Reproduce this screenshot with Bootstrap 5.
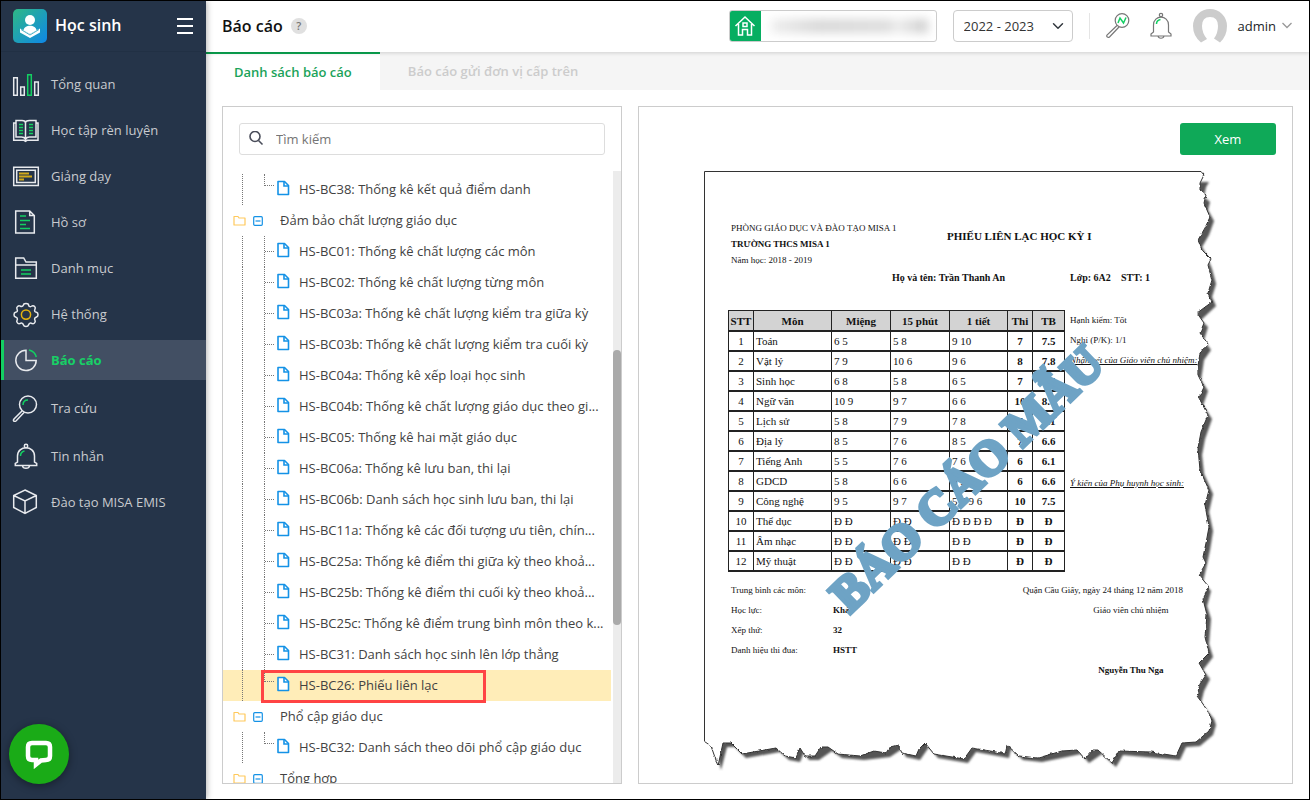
<!DOCTYPE html>
<html lang="vi">
<head>
<meta charset="utf-8">
<meta name="viewport" content="width=device-width, initial-scale=1">
<title>Báo cáo - Học sinh</title>
<link href="https://cdn.jsdelivr.net/npm/bootstrap@5.3.0/dist/css/bootstrap.min.css" rel="stylesheet">
<style>
body{font-family:"Open Sans",sans-serif;font-size:13px;line-height:20px;color:#424242;background:#fff}
a{text-decoration:none}
.app{height:100vh;border:1px solid #000;overflow:hidden}
/* sidebar */
.side{width:205px;background:#253449;box-shadow:1px 0 6px rgba(0,0,0,.3);z-index:2}
.side-head{height:51px;padding:0 12px;border-bottom:1px solid #213044}
.side-head h1{font-size:16px;font-weight:600;color:#fff;line-height:24px;padding-bottom:2px}
.side-list{padding-top:12px;gap:6px}
.side-list a{min-height:40px;color:#c9cbcf;padding-left:8px;border-left:3px solid transparent}
.side-list .tall a{min-height:44px}
.side-list svg{width:28px;height:28px;margin-right:11px;fill:none;stroke:#e8eaee;stroke-width:1.5}
.side-list .active{background:#424f63;border-left-color:#13cf62;color:#18cf66;font-weight:700}
.menu-btn{padding-bottom:4px!important}
.chat{left:8px;bottom:15px;width:60px;height:60px;border-radius:50%;background:#1aab17;box-shadow:0 2px 8px rgba(0,0,0,.4)}
/* header */
.topbar{height:51px;box-shadow:0 1px 4px rgba(0,0,0,.16);z-index:1;padding:0 17px 2px 16px;color:#212121}
.topbar h2{font-size:16px;font-weight:600;line-height:24px;color:#111}
.help{width:16px;height:16px;border-radius:50%;background:#e0e0e0;color:#777;font-size:11px;font-weight:600;line-height:16px}
.school{width:208px;height:32px;border:1px solid #ccc;border-radius:3px}
.school-icon{width:31px;background:#06ae61}
.school-name{filter:blur(5px);background:linear-gradient(90deg,#eee,#d8d8d8 30%,#ddd 75%,#eee 80%,#ccc);margin:8px 8px 8px 10px}
.year{width:120px;height:32px;font-size:13px;line-height:20px;padding:5px 30px 5px 10px;border:1px solid #ccc;border-radius:4px;color:#333;background-size:12px 12px;background-position:right 8px center}
.sep{width:1px;height:26px;background:#e5e5e5}
.avatar{margin-right:10px}
.caret{margin-left:6px}
/* tabs */
.tabs{height:38px;background:#f5f5f5;font-weight:600}
.tabs a{padding:0 28px;color:#ccc}
.tabs .on{background:#fff;border-top:2px solid #0aa550;color:#1ba35a}
.work{padding:16px;padding-bottom:15px;gap:16px}
.pane{border:1px solid #ccc}
/* tree */
.tree-pane{width:400px}
.find{height:32px;margin:16px;border:1px solid #ddd;border-radius:3px}
.find input{border:0;font-size:13px;padding:0 12px;outline:0}
.find input::placeholder{color:#757575;opacity:1}
.tree{padding-top:3px;margin-right:2px}
.tree li{height:31px}
.tree .picked{background:#ffedb8}
.tree a{color:#424242;white-space:nowrap;padding-bottom:2px}
.trunk{width:20px;border-right:1px dotted #777}
.branch{width:22px;border-right:1px dotted #777}
.twig{width:9px;height:16px;border-bottom:1px dotted #777;margin-right:2px}
.last .branch{height:12px}
.last .twig{height:12px}
.leaf{width:14px;height:16px;margin:6px 9px 0 0}
.group{padding-left:10px}
.group .folder{width:13px;height:11px;margin-right:7px}
.group .toggle{width:10px;height:10px;margin-right:17px}
.callout{left:38px;top:0;width:225px;height:33px;border:3px solid #f44;z-index:1}
.rail{width:8px;background:#ececec;padding-top:179px}
.thumb{height:275px;background:#aaa;border-radius:4px}
.view{width:96px;height:32px;background:#0fa958;color:#fff;font-size:13px;line-height:20px;border:0;border-radius:3px}
.view:hover{background:#0b9a4e;color:#fff}
/* sample report */
.paper{width:523px;height:600px;font-family:"Liberation Serif",serif;font-size:9px;line-height:16px;color:#111;padding:49px 0 0 24px}
.edge{left:0;top:0;width:523px;height:600px}
.org{width:219px;padding-left:3px}
.report-title{font-size:11px;line-height:16px;font-weight:700;margin-top:8px}
.who{grid-template-columns:164px 178px 51px auto;font-size:10px;font-weight:700;line-height:20px;margin-bottom:22px}
.marks{width:336px;table-layout:fixed;border-collapse:collapse;font-size:11px;line-height:16px;text-align:center}
.marks th,.marks td{border:1px solid #222;border-bottom-width:2px;height:20px;padding:1px 2px 0;white-space:nowrap}
.marks th{background:#d3d3d3;padding:1px 0 0}
.marks td:nth-child(n+2):nth-child(-n+5){text-align:left}
.marks td:nth-child(n+6){font-weight:700}
.notes{line-height:20px;padding-left:5px}
.sums{grid-template-columns:102px 100px;line-height:20px;margin:8px 0 0 3px;align-content:start}
.sign{line-height:20px;margin:8px 44px 0 0;white-space:nowrap}
.signer{padding-left:56px}
.stamp{left:50%;top:50%;font-size:49px;line-height:48px;font-weight:700;color:#6ea3c5;-webkit-text-stroke:4px #6ea3c5;white-space:nowrap;transform:translate(-50%,-50%) rotate(-44deg);margin:8px 0 0 1px}
</style>
</head>
<body>
<svg class="d-none">
<symbol id="leaf" viewBox="0 0 14 16"><path d="M2 1.500h6.500l4 4v9H2z" fill="#fff" stroke="#1492e6" stroke-width="1.600" stroke-linejoin="round"/><path d="M8 1.500v4.500h4.500" fill="none" stroke="#1492e6" stroke-width="1.600"/></symbol>
<symbol id="folder" viewBox="0 0 13 11"><path d="M1 1.500h4l1 1.500h6v7H1z" fill="none" stroke="#ffc95c" stroke-width="1.200" stroke-linejoin="round"/></symbol>
<symbol id="minus" viewBox="0 0 10 10"><rect x=".7" y=".7" width="8.600" height="8.600" rx="1" fill="#fff" stroke="#1492e6" stroke-width="1.200"/><path d="M2.500 5h5" stroke="#1492e6" stroke-width="1.200"/></symbol>
</svg>
<div class="app d-flex">
<aside class="side position-relative flex-shrink-0">
  <div class="side-head d-flex align-items-center">
    <svg width="34" height="34" viewBox="0 0 34 34"><defs><linearGradient id="lg" x1="0" y1="0" x2="1" y2="1"><stop stop-color="#2fb985"/><stop offset="1" stop-color="#0e87e8"/></linearGradient></defs><rect width="34" height="34" rx="5" fill="url(#lg)"/><circle cx="17" cy="11" r="5" fill="#fff"/><path d="M10.500 21.500c0-6.500 13-6.500 13 0L17 25z" fill="#fff"/><path d="M7 19.500l3 1.500 7 4 7-4 3-1.500v4L17 29 7 23.500z" fill="#fff"/><path d="M8 20.500l9 5.500 9-5.500" fill="none" stroke="#1f9fb8" stroke-width=".8"/></svg>
    <h1 class="mb-0 ms-2 me-auto">Học sinh</h1>
    <button class="menu-btn btn p-0 border-0" aria-label="Menu"><svg width="18" height="18" viewBox="0 0 18 18"><path d="M1 2h16M1 9h16M1 16h16" stroke="#fff" stroke-width="2.200"/></svg></button>
  </div>
  <ul class="side-list nav flex-column flex-nowrap">
    <li><a href="#" class="d-flex align-items-center"><svg viewBox="0 0 28 28"><path d="M1.700 7.700h3.600v17.600H1.700zM8.700 17h3.600v8.300H8.700zM22.700 12h3.600v13.300h-3.600z"/><path d="M15.700 4.700h3.600v20.600h-3.600z" stroke="#13cf62"/></svg>Tổng quan</a></li>
    <li><a href="#" class="d-flex align-items-center"><svg viewBox="0 0 28 28"><path d="M4 7H1.700v17.300H12l1.500 1 1.500-1h11V7h-2M4 4.500h6c2 0 3.500 1 3.500 2.500v16c-1-1.500-2-2-4-2H4zM24 4.500h-6.500c-2 0-4 1-4 2.500v16c1-1.500 2-2 4-2H24z"/><path d="M7 8.500h4M7 11.500h4M7 14.500h4M7 17.500h4M17 8.500h4M17 11.500h4M17 14.500h4M17 17.500h4" stroke="#13cf62"/></svg>Học tập rèn luyện</a></li>
    <li><a href="#" class="d-flex align-items-center"><svg viewBox="0 0 28 28"><path d="M1.700 5.200h24.600v18.300H1.700zM4.700 8.200h18.600v12.300H4.700z"/><path d="M7 11.500h10M7 14.500h13M7 17.500h5" stroke="#d3a91a" stroke-width="2"/></svg>Giảng dạy</a></li>
    <li><a href="#" class="d-flex align-items-center"><svg viewBox="0 0 28 28"><path d="M3.700 3h14l4.600 4.500V25H3.700zM17.700 3v4.500h4.600"/><path d="M8 8h6M8 12.500h10M8 16.500h6M8 20.500h10" stroke="#13cf62"/></svg>Hồ sơ</a></li>
    <li><a href="#" class="d-flex align-items-center"><svg viewBox="0 0 28 28"><path d="M3.700 24.300V4h8l2.300 4h10.300v16.300zM3.700 11h20.600"/><path d="M9 16h10M9 20h10" stroke="#13cf62"/></svg>Danh mục</a></li>
    <li><a href="#" class="d-flex align-items-center"><svg viewBox="0 0 28 28"><path d="M11.500 5c0-2 5-2 5 0 .5 2 2 2 3.500 1 2-1 4 1.500 3 3-1 2 0 3 1.500 3.300 2 .7 2 4 0 4.700-1.500.5-2.500 1.500-1.500 3.500 1 1.500-1.500 4-3 3-2-1-3 0-3.500 1.500-.5 2-4.500 2-5 0-.5-1.500-1.500-2.500-3.500-1.500-1.500 1-4-1.500-3-3 1-2 0-3-1.500-3.500-2-.7-2-4 0-4.700C5 12 6 11 5 9 4 7.500 6.500 5 8 6c2 1 3 0 3.500-1z"/><circle cx="14" cy="14.600" r="4.600" stroke="#e3b30f"/></svg>Hệ thống</a></li>
    <li><a href="#" class="active d-flex align-items-center"><svg viewBox="0 0 28 28"><path d="M14 4.200a10.200 10.200 0 1 0 10.200 10.300H14z"/><path d="M17 4c4 1 6.500 3.500 7.300 7" stroke="#13cf62"/></svg>Báo cáo</a></li>
    <li class="tall"><a href="#" class="d-flex align-items-center"><svg viewBox="0 0 28 28"><circle cx="16" cy="10.500" r="8.500"/><path d="M10 17l-8 8c-1.500 2 .5 3 2 2l8-8.500"/><path d="M11 11c0-3 2-5 5-5" stroke="#13cf62"/></svg>Tra cứu</a></li>
    <li><a href="#" class="d-flex align-items-center"><svg viewBox="0 0 28 28"><circle cx="14" cy="4" r="1.700"/><path d="M5.500 20v-6c0-11 17-11 17 0v6l2.200 1.500v2H3.300v-2zM10.500 24c.5 3 6.500 3 7 0"/><path d="M8.500 14c0-3 1.500-4.500 4-5" stroke="#13cf62"/></svg>Tin nhắn</a></li>
    <li><a href="#" class="d-flex align-items-center"><svg viewBox="0 0 28 28"><path d="M13 2L24.300 7.500v12L13 25.500l-11.300-6v-12zM1.700 7.500L13 13l11.300-5.500M13 13v12.500"/></svg>Đào tạo MISA EMIS</a></li>
  </ul>
  <button class="chat btn p-0 border-0 position-absolute" aria-label="Chat"><svg width="30" height="30" viewBox="0 0 30 30"><path d="M8 4h14q4 0 4 4v9q0 4-4 4l-5 .5-5 4V21H8q-4 0-4-4V8q0-4 4-4z" fill="none" stroke="#fff" stroke-width="4.500"/></svg></button>
</aside>
<div class="d-flex flex-column flex-fill overflow-hidden">
  <header class="topbar d-flex align-items-center position-relative flex-shrink-0 bg-white">
    <h2 class="mb-0">Báo cáo</h2>
    <span class="help text-center ms-2 me-auto">?</span>
    <div class="school d-flex overflow-hidden">
      <span class="school-icon d-flex align-items-center justify-content-center"><svg width="22" height="22" viewBox="0 0 22 22" fill="none" stroke="#fff" stroke-width="1.500"><path d="M1.500 11L11 2l9.500 9M4.500 9v11h4v-5.500h5V20h4V9M9 8h4v3.500H9z"/></svg></span>
      <span class="school-name flex-fill"></span>
    </div>
    <select class="form-select year ms-3" aria-label="Năm học"><option>2022 - 2023</option></select>
    <span class="sep ms-3 me-3"></span>
    <a href="#" aria-label="Tra cứu"><svg width="24" height="26" viewBox="0 0 24 26" fill="none" stroke="#777" stroke-width="1.200"><circle cx="16" cy="7.500" r="6.800"/><path d="M11 12.500l-10 9.500c-1 1.800 1 3 2.500 2L13 14"/><path d="M12 10l2-5 3.500 5L20 4.500" stroke="#13cf62" stroke-width="1.500"/></svg></a>
    <a href="#" class="ms-3" aria-label="Thông báo"><svg width="30" height="30" viewBox="0 0 30 30" fill="none" stroke="#777" stroke-width="1.200"><circle cx="15" cy="4" r="1.700"/><path d="M7.500 21V14c0-10.500 15-10.500 15 0v7l2.500 2v2H5v-2zM12 25c.5 3 5.500 3 6 0"/><path d="M10.500 13c0-3 1.500-4 4-4.500" stroke="#13cf62" stroke-width="1.500"/></svg></a>
    <a href="#" class="d-flex align-items-center text-dark ms-3"><svg width="36" height="38" viewBox="0 0 36 38" class="avatar"><path d="M9 35.500Q1 29 1 19a17 17 0 0 1 34 0q0 10-7 16.500l-6-4Q26 26 26 19q0-9-8-9t-8 9q0 7 5 13z" fill="#ccc"/></svg>admin<svg class="caret" width="10" height="7" viewBox="0 0 10 7"><path d="M.5 1L5 5.500 9.500 1" fill="none" stroke="#999" stroke-width="1.300"/></svg></a>
  </header>
  <nav class="tabs d-flex flex-shrink-0"><a href="#" class="on d-flex align-items-center">Danh sách báo cáo</a><a href="#" class="d-flex align-items-center">Báo cáo gửi đơn vị cấp trên</a></nav>
  <main class="work d-flex flex-fill overflow-hidden">
    <section class="tree-pane pane d-flex flex-column flex-shrink-0 overflow-hidden">
      <div class="find d-flex align-items-center flex-shrink-0"><svg class="ms-2" width="16" height="16" viewBox="0 0 16 16" fill="none" stroke="#4a4d5a" stroke-width="1.600"><circle cx="7" cy="5.500" r="5"/><path d="M10.500 9.500L14.500 13.500"/></svg><input type="text" class="flex-fill" placeholder="Tìm kiếm" aria-label="Tìm kiếm"></div>
      <div class="d-flex flex-fill overflow-hidden">
      <ul class="tree list-unstyled mb-0 flex-fill">
        <li class="last d-flex"><span class="trunk"></span><span class="branch"></span><span class="twig"></span><svg class="leaf"><use href="#leaf"/></svg><a href="#" class="align-self-center">HS-BC38: Thống kê kết quả điểm danh</a></li>
        <li class="group d-flex align-items-center"><svg class="folder"><use href="#folder"/></svg><svg class="toggle"><use href="#minus"/></svg><a href="#">Đảm bảo chất lượng giáo dục</a></li>
        <li class="d-flex"><span class="trunk"></span><span class="branch"></span><span class="twig"></span><svg class="leaf"><use href="#leaf"/></svg><a href="#" class="align-self-center">HS-BC01: Thống kê chất lượng các môn</a></li>
        <li class="d-flex"><span class="trunk"></span><span class="branch"></span><span class="twig"></span><svg class="leaf"><use href="#leaf"/></svg><a href="#" class="align-self-center">HS-BC02: Thống kê chất lượng từng môn</a></li>
        <li class="d-flex"><span class="trunk"></span><span class="branch"></span><span class="twig"></span><svg class="leaf"><use href="#leaf"/></svg><a href="#" class="align-self-center">HS-BC03a: Thống kê chất lượng kiểm tra giữa kỳ</a></li>
        <li class="d-flex"><span class="trunk"></span><span class="branch"></span><span class="twig"></span><svg class="leaf"><use href="#leaf"/></svg><a href="#" class="align-self-center">HS-BC03b: Thống kê chất lượng kiểm tra cuối kỳ</a></li>
        <li class="d-flex"><span class="trunk"></span><span class="branch"></span><span class="twig"></span><svg class="leaf"><use href="#leaf"/></svg><a href="#" class="align-self-center">HS-BC04a: Thống kê xếp loại học sinh</a></li>
        <li class="d-flex"><span class="trunk"></span><span class="branch"></span><span class="twig"></span><svg class="leaf"><use href="#leaf"/></svg><a href="#" class="align-self-center">HS-BC04b: Thống kê chất lượng giáo dục theo gi...</a></li>
        <li class="d-flex"><span class="trunk"></span><span class="branch"></span><span class="twig"></span><svg class="leaf"><use href="#leaf"/></svg><a href="#" class="align-self-center">HS-BC05: Thống kê hai mặt giáo dục</a></li>
        <li class="d-flex"><span class="trunk"></span><span class="branch"></span><span class="twig"></span><svg class="leaf"><use href="#leaf"/></svg><a href="#" class="align-self-center">HS-BC06a: Thống kê lưu ban, thi lại</a></li>
        <li class="d-flex"><span class="trunk"></span><span class="branch"></span><span class="twig"></span><svg class="leaf"><use href="#leaf"/></svg><a href="#" class="align-self-center">HS-BC06b: Danh sách học sinh lưu ban, thi lại</a></li>
        <li class="d-flex"><span class="trunk"></span><span class="branch"></span><span class="twig"></span><svg class="leaf"><use href="#leaf"/></svg><a href="#" class="align-self-center">HS-BC11a: Thống kê các đối tượng ưu tiên, chín...</a></li>
        <li class="d-flex"><span class="trunk"></span><span class="branch"></span><span class="twig"></span><svg class="leaf"><use href="#leaf"/></svg><a href="#" class="align-self-center">HS-BC25a: Thống kê điểm thi giữa kỳ theo khoả...</a></li>
        <li class="d-flex"><span class="trunk"></span><span class="branch"></span><span class="twig"></span><svg class="leaf"><use href="#leaf"/></svg><a href="#" class="align-self-center">HS-BC25b: Thống kê điểm thi cuối kỳ theo khoả...</a></li>
        <li class="d-flex"><span class="trunk"></span><span class="branch"></span><span class="twig"></span><svg class="leaf"><use href="#leaf"/></svg><a href="#" class="align-self-center">HS-BC25c: Thống kê điểm trung bình môn theo k...</a></li>
        <li class="d-flex"><span class="trunk"></span><span class="branch"></span><span class="twig"></span><svg class="leaf"><use href="#leaf"/></svg><a href="#" class="align-self-center">HS-BC31: Danh sách học sinh lên lớp thẳng</a></li>
        <li class="picked last d-flex position-relative"><span class="trunk"></span><span class="branch"></span><span class="twig"></span><svg class="leaf"><use href="#leaf"/></svg><a href="#" class="align-self-center">HS-BC26: Phiếu liên lạc</a><span class="callout position-absolute"></span></li>
        <li class="group d-flex align-items-center"><svg class="folder"><use href="#folder"/></svg><svg class="toggle"><use href="#minus"/></svg><a href="#">Phổ cập giáo dục</a></li>
        <li class="last d-flex"><span class="trunk"></span><span class="branch"></span><span class="twig"></span><svg class="leaf"><use href="#leaf"/></svg><a href="#" class="align-self-center">HS-BC32: Danh sách theo dõi phổ cập giáo dục</a></li>
        <li class="group d-flex align-items-center"><svg class="folder"><use href="#folder"/></svg><svg class="toggle"><use href="#minus"/></svg><a href="#">Tổng hợp</a></li>
      </ul>
      <div class="rail flex-shrink-0"><div class="thumb"></div></div>
      </div>
    </section>
    <section class="pane flex-fill overflow-hidden">
      <div class="d-flex justify-content-end p-3"><button class="view btn p-0">Xem</button></div>
      <article class="paper position-relative mx-auto">
        <svg class="edge position-absolute" viewBox="704 171 523 600">
          <defs>
            <filter id="soft" x="-5%" y="-5%" width="110%" height="110%"><feGaussianBlur stdDeviation="1.300"/></filter>
            <filter id="rough" x="-5%" y="-5%" width="110%" height="110%"><feTurbulence type="fractalNoise" baseFrequency=".25" numOctaves="2"/><feDisplacementMap in="SourceGraphic" scale="3" xChannelSelector="R" yChannelSelector="G"/></filter>
            <path id="torn" d="M1201 171.500L1204 175 1200 183 1200 190 1206 195 1204 203 1210 217 1205 228 1198 240 1202 250 1211 259 1208 265 1212 280 1208 293 1212 302 1197 313 1204 323 1200 333 1208 344 1200 353 1197 373 1204 387 1199 398 1208 415 1201 432 1198 448 1200 470 1209 490 1205 505 1209 527 1206 543 1203 557 1206 563 1199 575 1209 587 1203 599 1207 615 1205 637 1209 653 1199 663 1206 675 1200 684 1197 696 1203 704 1210 715 1212 721 1209 731 1196 742 1182 743 1176 756 1151 752 1119 751 1112 763 1098 750 1093 750 1085 759 1077 750 1062 751 1038 758 1019 756 1007 745 1005 754 996 752 972 748 964 759 934 754 925 743 919 749 916 756 902 753 898 745 890 747 886 753 874 751 860 756 838 754 828 747 821 747 815 756 805 756 800 748 796 758 785 756 776 748 742 754 731 743 723 743 718 766 711 746 704.500 741.500"/>
          </defs>
          <path d="M1205 178L1202 183 1200 193 1206 198 1204 206 1210 217 1205 231 1198 243 1202 250 1208 265 1212 280 1208 293 1212 302 1197 316 1204 323 1200 336 1207 346 1200 356 1197 376 1204 387 1199 401 1208 415 1201 435 1198 451 1200 470 1209 490 1205 508 1209 527 1206 546 1203 560 1199 578 1207 587 1203 602 1207 615 1205 640 1209 653 1199 666 1206 675 1200 687 1197 699 1210 715 1212 721 1209 731 1196 742 1182 743 1176 756 1119 751 1112 763 1098 750 1085 759 1077 750 1038 758 1019 756 1007 745 1005 754 972 748 964 759 934 754 925 743 916 756 902 753 898 745 886 753 860 756 838 754 828 747 815 756 805 756 800 748 796 758 785 756 776 748 742 754 731 743 723 743 717 766 711 741V178z" fill="#555" transform="translate(4 4)" filter="url(#soft)"/>
          <g filter="url(#rough)"><use href="#torn" fill="#fff" stroke="#333"/></g>
          <path d="M704 171h494v30l-2 530-470 10-22 0z" fill="#fff"/>
          <path d="M1201 171.500H704.500v570" fill="none" stroke="#333"/>
        </svg>
        <div class="position-relative">
          <div class="d-flex"><div class="org">PHÒNG GIÁO DỤC VÀ ĐÀO TẠO MISA 1<br><b>TRƯỜNG THCS MISA 1</b><br>Năm học: 2018 - 2019</div><div class="report-title">PHIẾU LIÊN LẠC HỌC KỲ I</div></div>
          <div class="who d-grid"><span></span><span>Họ và tên: Trần Thanh An</span><span>Lớp: 6A2</span><span>STT: 1</span></div>
          <div class="d-flex">
            <table class="marks">
              <colgroup><col style="width:25px"><col style="width:78px"><col style="width:59px"><col style="width:59px"><col style="width:58px"><col style="width:25px"><col style="width:32px"></colgroup>
              <tr><th>STT</th><th>Môn</th><th>Miệng</th><th>15 phút</th><th>1 tiết</th><th>Thi</th><th>TB</th></tr>
              <tr><td>1</td><td>Toán</td><td>6 5</td><td>5 8</td><td>9 10</td><td>7</td><td>7.5</td></tr>
              <tr><td>2</td><td>Vật lý</td><td>7 9</td><td>10 6</td><td>9 6</td><td>8</td><td>7.8</td></tr>
              <tr><td>3</td><td>Sinh học</td><td>6 8</td><td>5 8</td><td>6 5</td><td>7</td><td>6.4</td></tr>
              <tr><td>4</td><td>Ngữ văn</td><td>10 9</td><td>9 7</td><td>6 6</td><td>10</td><td>8.1</td></tr>
              <tr><td>5</td><td>Lịch sử</td><td>5 8</td><td>7 9</td><td>7 8</td><td>7</td><td>7.1</td></tr>
              <tr><td>6</td><td>Địa lý</td><td>8 5</td><td>7 6</td><td>8 5</td><td>7</td><td>6.6</td></tr>
              <tr><td>7</td><td>Tiếng Anh</td><td>5 5</td><td>7 6</td><td>7 6</td><td>6</td><td>6.1</td></tr>
              <tr><td>8</td><td>GDCD</td><td>5 8</td><td>6 6</td><td>6 5</td><td>6</td><td>6.6</td></tr>
              <tr><td>9</td><td>Công nghệ</td><td>9 5</td><td>9 7</td><td>5 7 9 6</td><td>10</td><td>7.5</td></tr>
              <tr><td>10</td><td>Thể dục</td><td>Đ Đ</td><td>Đ Đ</td><td>Đ Đ Đ Đ</td><td>Đ</td><td>Đ</td></tr>
              <tr><td>11</td><td>Âm nhạc</td><td>Đ Đ</td><td>Đ Đ</td><td>Đ Đ</td><td>Đ</td><td>Đ</td></tr>
              <tr><td>12</td><td>Mỹ thuật</td><td>Đ Đ</td><td>Đ Đ</td><td>Đ Đ</td><td>Đ</td><td>Đ</td></tr>
            </table>
            <div class="notes d-flex flex-column"><span>Hạnh kiểm: Tốt</span><span>Nghỉ (P/K): 1/1</span><em><u>Nhận xét của Giáo viên chủ nhiệm:</u></em><em class="mt-auto mb-auto pt-4"><u>Ý kiến của Phụ huynh học sinh:</u></em></div>
          </div>
          <div class="d-flex justify-content-between">
            <div class="sums d-grid"><span>Trung bình các môn:</span><b>7.2</b><span>Học lực:</span><b>Khá</b><span>Xếp thứ:</span><b>32</b><span>Danh hiệu thi đua:</span><b>HSTT</b></div>
            <div class="sign">Quận Cầu Giấy, ngày 24 tháng 12 năm 2018<div class="signer text-center">Giáo viên chủ nhiệm<br><br><br><b>Nguyễn Thu Nga</b></div></div>
          </div>
        </div>
        <div class="stamp position-absolute">BÁO CÁO MẪU</div>
      </article>
    </section>
  </main>
</div>
</div>
<script src="https://cdn.jsdelivr.net/npm/bootstrap@5.3.0/dist/js/bootstrap.bundle.min.js"></script>
</body>
</html>
